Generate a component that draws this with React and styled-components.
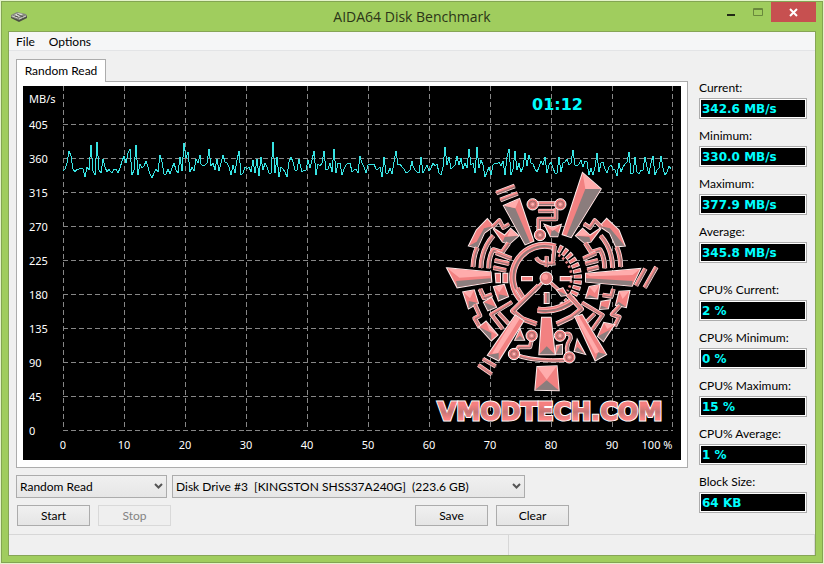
import React from "react";
import styled, { createGlobalStyle } from "styled-components";

const GlobalStyle = createGlobalStyle`
  * { box-sizing: border-box; }
  body { margin: 0; background: #e4f3ca; }
  body, button, input, select { font-family: Lato, "Open Sans", sans-serif; font-size: 12px; color: #000; }
`;

const Window = styled.div`
  display: flex;
  flex-direction: column;
  min-height: calc(100vh - 2px);
  margin: 1px;
  border: 1px solid #83a552;
  background: #a0cd5e;
  padding: 0 6px 6px;
`;

const TitleBar = styled.header`
  display: grid;
  grid-template-columns: 120px 1fr 120px;
  height: 29px;
`;

const AppIcon = styled.svg`
  margin: 7px 0 0 2px;
`;

const Title = styled.h1`
  margin: 0;
  font: 400 14px/29px "Open Sans", "Noto Sans", sans-serif;
  text-align: center;
  color: #2b3518;
`;

const WindowButtons = styled.div`
  display: flex;
  justify-content: flex-end;
  align-items: flex-start;
`;

const WindowButton = styled.button`
  width: ${(p) => (p.$close ? 45 : 27)}px;
  height: 20px;
  padding: 0;
  border: 0;
  background: ${(p) => (p.$close ? "#c75050" : "transparent")};
  svg { display: block; margin: 0 auto; }
`;

const Client = styled.div`
  flex: 1;
  display: flex;
  flex-direction: column;
  border: 1px solid #86a556;
  background: #f0f0f0;
`;

const MenuBar = styled.nav`
  display: flex;
  height: 19px;
  background: #f5f6f7;
  border-bottom: 1px solid #e3e4e6;
`;

const MenuButton = styled.button`
  border: 0;
  background: transparent;
  padding: 0 7px;
  line-height: 20px;
`;

const Content = styled.main`
  flex: 1;
  display: grid;
  grid-template-columns: 1fr 108px;
  gap: 11px;
  padding: 8px 8px 6px 7px;
`;

const Tab = styled.button`
  display: block;
  position: relative;
  z-index: 1;
  height: 23px;
  min-width: 90px;
  margin-bottom: -1px;
  padding: 0 7px;
  border: 1px solid #acacac;
  border-bottom: 0;
  background: #fff;
  line-height: 20px;
`;

const TabPanel = styled.section`
  padding: 4px 6px 7px;
  border: 1px solid #acacac;
  background: #fff;
`;

const Chart = styled.svg`
  display: block;
  width: 100%;
  height: auto;
  background: #000;
`;

const AxisText = styled.text`
  font: 11px "Noto Sans", sans-serif;
  fill: #fff;
`;

const Clock = styled.text`
  font: bold 16px "DejaVu Sans", sans-serif;
  fill: #00ffff;
`;

const LogoText = styled.text`
  font: bold 24px "DejaVu Sans", sans-serif;
  fill: url(#letters);
  stroke: ${(p) => (p.$outline ? "#fff" : "url(#letters)")};
  stroke-width: ${(p) => (p.$outline ? 3 : 1)}px;
`;

const SelectRow = styled.div`
  display: flex;
  gap: 5px;
  margin-top: 7px;
`;

const SelectBox = styled.label`
  position: relative;
  flex: 0 1 ${(p) => p.$width}px;
  select {
    appearance: none;
    display: block;
    width: 100%;
    height: 23px;
    padding: 0 20px 0 3px;
    border: 1px solid #acacac;
    border-radius: 0;
    background: linear-gradient(#f0f0f0, #e6e6e6);
    white-space: pre;
  }
  svg {
    position: absolute;
    right: 4px;
    top: 8px;
    pointer-events: none;
  }
`;

const ButtonRow = styled.div`
  display: flex;
  gap: 8px;
  margin: 7px 0 0 1px;
`;

const PushButton = styled.button`
  width: 73px;
  height: 21px;
  padding: 0;
  border: 1px solid #acacac;
  background: linear-gradient(#f0f0f0, #e5e5e5);
  line-height: 19px;
  &:disabled { color: #838383; border-color: #d9d9d9; background: #efefef; }
`;

const Spacer = styled.div`
  flex: 0 1 ${(p) => p.$width}px;
`;

const Readings = styled.aside`
  display: flex;
  flex-direction: column;
  gap: 9px;
  padding-top: 21px;
`;

const ReadingGroup = styled.div`
  display: grid;
  gap: 9px;
  &:last-child { margin-top: 10px; }
`;

const Reading = styled.label`
  display: grid;
  gap: 2px;
  line-height: 16px;
  white-space: nowrap;
`;

const ReadingValue = styled.input`
  width: 100%;
  height: 21px;
  padding: 0 2px;
  border: 1px solid #acacac;
  border-radius: 0;
  outline: 1px solid #fff;
  outline-offset: -2px;
  background: #000;
  color: #00ffff;
  font: bold 12px "DejaVu Sans", sans-serif;
`;

const StatusBar = styled.footer`
  display: grid;
  grid-template-columns: 62fr 38fr;
  height: 21px;
  border-top: 1px solid #d7d7d7;
`;

const StatusCell = styled.div`
  border-right: 1px solid #d7d7d7;
`;

const throughput = [
  { from: 63, to: 245, values: [171, 169, 163, 151, 156, 169, 172, 169, 169, 168, 169, 177, 167, 170, 145, 171, 175, 142, 170, 173, 159, 167, 172, 169, 171, 173, 169, 169, 173, 168, 161, 156, 163, 153, 149, 175, 170, 145, 175, 164, 168, 166, 161, 167, 174, 178, 173, 169, 172, 155, 162, 174, 174, 169, 174, 168, 163, 170, 173, 157, 171, 143, 158, 152, 172, 167, 171, 159, 163, 155, 164, 166, 165, 163, 149, 166, 163, 170, 159, 171, 163, 155, 162, 163, 167, 175, 165, 173, 160, 151, 175, 173, 167] },
  { from: 247, to: 467, values: [169, 167, 172, 160, 173, 159, 176, 157, 170, 163, 167, 173, 173, 142, 173, 157, 177, 167, 169, 172, 177, 162, 157, 162, 170, 170, 159, 168, 172, 170, 170, 160, 168, 160, 151, 175, 164, 166, 163, 151, 170, 169, 163, 172, 149, 173, 163, 163, 175, 169, 165, 163, 163, 172, 170, 169, 173, 156, 163, 167, 173, 165, 164, 164, 164, 169, 169, 167, 177, 157, 173, 173, 168, 174, 162, 151, 165, 164, 167, 169, 173, 172, 170, 161, 166, 170, 172, 173, 157, 173, 169, 165, 171, 168, 163, 166, 164, 173, 175, 167, 147, 165, 157, 169, 167, 165, 156, 165, 158, 169, 163, 168] },
  { from: 469, to: 671, values: [149, 165, 163, 173, 147, 168, 160, 165, 177, 172, 167, 175, 165, 163, 164, 162, 166, 161, 175, 157, 149, 175, 169, 151, 170, 163, 172, 167, 153, 166, 155, 163, 164, 169, 172, 167, 161, 165, 157, 173, 165, 162, 168, 173, 173, 157, 172, 163, 162, 159, 165, 163, 150, 165, 166, 164, 160, 167, 161, 162, 175, 168, 175, 167, 153, 172, 163, 162, 169, 173, 167, 165, 169, 170, 176, 163, 172, 167, 164, 162, 152, 174, 173, 157, 172, 174, 170, 170, 157, 167, 174, 163, 156, 175, 170, 168, 156, 168, 175, 172, 166, 169] },
];

const linePoints = throughput
  .flatMap(({ from, to, values }) =>
    values.map((y, i) => `${Math.round(from + ((to - from) * i) / (values.length - 1))},${y}`)
  )
  .join(" ");

const gridX = [63, 124, 185, 246, 307, 368, 429, 490, 551, 612, 672];
const rateLabels = [405, 360, 315, 270, 225, 180, 135, 90, 45, 0];

function Trace({ d, w = 10 }) {
  return (
    <g fill="none" strokeLinejoin="round">
      <path d={d} stroke="#fbe9e9" strokeWidth={w + 5} />
      <path d={d} stroke="#f07c7c" strokeWidth={w + 1} />
      <path d={d} stroke="#957878" strokeWidth={w / 2.5} transform="translate(2 2)" />
      <path d={d} stroke="#ffa5a5" strokeWidth={w / 5} transform="translate(-2 -2)" />
    </g>
  );
}

function Facet({ p, shade, light }) {
  return (
    <g>
      <polygon points={p} fill="#f28181" stroke="#fbecec" strokeWidth="6" paintOrder="stroke" />
      {shade && <polygon points={shade} fill="#8b7d7d" />}
      {light && <polygon points={light} fill="#ffacac" />}
    </g>
  );
}

function Node({ x, y }) {
  return (
    <g>
      <circle cx={x} cy={y} r="17" fill="#f47d7d" stroke="#fff" strokeWidth="3" />
      <circle cx={x} cy={y} r="10" fill="#d98080" stroke="#a06969" strokeWidth="3" />
      <circle cx={x} cy={y} r="4" fill="#ffb5b5" />
    </g>
  );
}

function Emblem() {
  return (
    <g transform="translate(430 165) scale(0.333333)">
      {/* upper left */}
      <Trace d="M199 84L254 63" w={9} />
      <Trace d="M211 105L263 85" w={9} />
      <Facet p="222,122 268,102 310,228 286,238" shade="222,122 256,130 300,232 286,238" light="222,122 268,102 256,130" />
      <Facet p="117,242 140,196 172,163 190,184 162,204 142,248" shade="140,230 162,190 188,184 162,204 142,248 117,242" />
      <Trace d="M188 186L208 166L220 188L238 177" w={8} />
      <Facet p="190,190 224,212 242,192 265,212 238,236 218,230" shade="224,216 265,212 238,236 218,230" light="242,192 265,212 232,214" />
      <Trace d="M142 248Q130 272 129 306" />
      <Trace d="M190 212Q154 252 153 309" />
      <Trace d="M236 234L216 262L190 254Q176 276 176 310" />
      <Trace d="M198 263L244 281" />
      <Trace d="M194 286L237 296" />
      <Trace d="M190 308L228 316" />
      <Facet p="52,310 182,322 184,350 82,367" shade="78,348 182,340 184,350 82,367" light="52,310 182,322 182,332 88,338" />
      <Facet p="197,326 210,326 210,352 199,352" />
      <Facet p="220,326 232,326 232,352 220,352" />

      {/* crown */}
      <Trace d="M308 116H390" w={10} />
      <Trace d="M325 138H373" w={8} />
      <Trace d="M326 202V162H378V130" w={9} />
      <Node x={308} y={118} />
      <Node x={391} y={118} />
      <Node x={330} y={210} />
      <Facet p="345,180 366,188 392,180 382,214 362,214" shade="366,190 388,206 382,214 362,214" light="345,180 366,188 392,180 368,198" />

      {/* dial */}
      <path d="M385 250A98 98 0 0 1 394 425" fill="none" stroke="#fbe9e9" strokeWidth="25" strokeDasharray="12 5" />
      <path d="M385 250A98 98 0 0 1 394 425" fill="none" stroke="#ef7c7c" strokeWidth="20" strokeDasharray="8 9" strokeDashoffset="-2" />
      <path d="M385 270A76 76 0 0 1 412 378" fill="none" stroke="#e98787" strokeWidth="8" strokeDasharray="7 8" />
      <Trace d="M376 246A97 97 0 0 0 280 410" w={16} />
      <Trace d="M374 242L368 298M318 278Q332 302 376 294M350 274V306" w={8} />
      <Trace d="M312 380L348 340L394 382" w={6} />
      <circle cx="349" cy="340" r="19" fill="#df7d7d" stroke="#fff" strokeWidth="3" />
      <circle cx="345" cy="336" r="9" fill="#ff9e9e" />
      <Facet p="276,336 306,336 306,346 276,346" />
      <Facet p="392,336 422,336 422,346 392,346" />
      <Facet p="382,376 398,370 410,390 394,392" shade="382,376 410,390 394,392" />
      <Facet p="344,384 356,384 356,414 344,414" shade="350,384 356,384 356,414 350,414" />

      {/* upper right */}
      <g transform="translate(330 0)">
        <Facet p="128,25 182,72 93,216 68,208" shade="136,72 182,72 93,216 80,212" light="128,25 182,72 136,72" />
        <Facet p="254,242 236,196 200,162 180,184 210,204 228,244" shade="182,184 210,190 254,242 228,244 210,204" />
        <Trace d="M184 186L164 166L150 188L132 176" w={8} />
        <Facet p="182,190 150,212 128,192 108,212 134,234 152,230" shade="108,212 148,216 152,230 134,234" light="128,192 148,212 108,212" />
        <Trace d="M230 246Q242 272 242 306" />
        <Trace d="M182 212Q217 252 218 309" />
        <Trace d="M136 234L154 262L180 254Q194 276 194 310" />
        <Trace d="M168 264L130 281" />
        <Trace d="M174 286L136 296" />
        <Trace d="M176 306L142 315" />
        <Facet p="138,326 300,312 276,362 138,350" shade="138,340 278,348 276,362 138,350" light="138,326 300,312 278,330 150,334" />
        <Trace d="M288 362L316 311" w={9} />
        <Trace d="M314 368L349 306" w={9} />
      </g>

      {/* lower left */}
      <g transform="translate(0 360)">
        <Facet p="100,22 132,16 144,54 116,70" shade="116,48 144,54 116,70" light="100,22 132,16 120,40" />
        <Trace d="M134 58L150 92L134 100L150 128" w={9} />
        <Facet p="148,126 168,110 202,150 184,166" shade="148,126 184,144 184,166" light="168,110 202,150 178,136" />
        <Trace d="M150 12L162 38L186 29" w={10} />
        <Facet p="162,52 184,38 198,66 174,76" shade="162,52 198,66 174,76" />
        <Facet p="192,6 222,0 234,34 206,46" shade="206,28 234,34 206,46" light="192,6 222,0 208,22" />
        <Trace d="M246 51L184 88L218 132M206 84L236 116" w={8} />
        <Trace d="M262 10L282 42" w={10} />
        <Trace d="M326 2L248 78L278 102L320 117" w={11} />
        <Facet p="256,92 280,108 206,226 174,210" shade="174,210 206,204 206,226" light="256,92 270,100 204,204 186,206" />
        <Trace d="M159 222L197 244M145 240L185 268" w={8} />
        <Facet p="270,134 282,164 256,164" shade="270,152 282,164 256,164" />
        <Trace d="M305 165L300 186H266L252 207Q308 232 418 224" w={8} />
        <Trace d="M323 74Q384 84 437 40" w={15} />
        <Facet p="336,98 362,98 374,208 328,208" shade="350,184 374,208 328,208" />
        <Node x={305} y={152} />
        <Node x={252} y={207} />
        <Facet p="322,246 380,244 386,316 316,314" shade="350,286 386,316 316,314" light="322,246 380,244 350,284" />
      </g>

      {/* lower right */}
      <g transform="translate(330 360)">
        <Facet p="148,6 178,0 172,40 138,38" shade="148,30 172,40 138,38" light="148,6 178,0 164,24" />
        <Trace d="M220 12L214 34L188 30" w={9} />
        <Facet p="184,50 210,46 204,70 180,72" shade="184,62 204,70 180,72" />
        <Facet p="238,20 268,18 258,66 228,60" shade="236,50 258,66 228,60" light="238,20 268,18 248,42" />
        <Trace d="M240 62L216 88L238 96L224 124" w={9} />
        <Facet p="174,154 192,114 222,120 190,168" shade="174,154 210,134 190,168" light="192,114 222,120 202,132" />
        <Trace d="M126 53L188 90L157 134M164 86L134 116" w={8} />
        <Trace d="M84 28L124 72L94 96L50 117" w={11} />
        <Facet p="106,96 126,90 198,208 166,226" shade="166,226 174,202 198,208" light="106,96 116,92 178,200 166,206" />
        <Facet p="112,166 134,206 104,198" shade="112,186 134,206 104,198" />
        <Facet p="50,182 66,180 66,206 48,206" shade="60,182 66,180 66,206 48,206" />
        <Trace d="M66 150Q92 138 92 160Q72 190 88 214" w={8} />
        <Node x={60} y={152} />
        <Node x={88} y={217} />
      </g>
    </g>
  );
}

function DiskChart() {
  return (
    <Chart viewBox="23 86 658 374" role="img" aria-label="Random read throughput">
      <defs>
        <linearGradient id="letters" x1="0" y1="0" x2="0" y2="1">
          <stop offset="0.25" stopColor="#f57f7f" />
          <stop offset="0.5" stopColor="#c57575" />
          <stop offset="0.75" stopColor="#fb8585" />
        </linearGradient>
      </defs>
      <g stroke="#878787" strokeDasharray="5 3" shapeRendering="crispEdges">
        {gridX.map((x) => <path key={x} d={`M${x + 0.5} 86V431`} />)}
        {rateLabels.map((n, i) => <path key={n} d={`M63 ${124.5 + 34 * i}H673`} />)}
      </g>
      <AxisText x="29" y="103">MB/s</AxisText>
      {rateLabels.map((n, i) => <AxisText key={n} x="29" y={129 + 34 * i}>{n}</AxisText>)}
      {gridX.map((x, i) => (
        <AxisText key={x} x={i === 10 ? 657 : x} y="449" textAnchor="middle">
          {i === 10 ? "100 %" : i * 10}
        </AxisText>
      ))}
      <polyline points={linePoints} fill="none" stroke="#38e4e4" shapeRendering="crispEdges" />
      <Clock x="532" y="110">01:12</Clock>
      <Emblem />
      <LogoText $outline aria-hidden="true" x="550" y="420" textAnchor="middle">VMODTECH.COM</LogoText>
      <LogoText x="550" y="420" textAnchor="middle">VMODTECH.COM</LogoText>
    </Chart>
  );
}

function Picker({ label, width, value }) {
  return (
    <SelectBox $width={width}>
      <select aria-label={label} defaultValue={value}>
        <option>{value}</option>
      </select>
      <svg width="9" height="7" viewBox="0 0 9 7" aria-hidden="true">
        <path d="M1 1L4.5 4.5L8 1" fill="none" stroke="#555" strokeWidth="2" />
      </svg>
    </SelectBox>
  );
}

function Stat({ label, value }) {
  return (
    <Reading>
      {label}
      <ReadingValue readOnly value={value} />
    </Reading>
  );
}

const rates = [
  ["Current:", "342.6 MB/s"],
  ["Minimum:", "330.0 MB/s"],
  ["Maximum:", "377.9 MB/s"],
  ["Average:", "345.8 MB/s"],
];

const load = [
  ["CPU% Current:", "2 %"],
  ["CPU% Minimum:", "0 %"],
  ["CPU% Maximum:", "15 %"],
  ["CPU% Average:", "1 %"],
  ["Block Size:", "64 KB"],
];

export default function App() {
  return (
    <>
      <GlobalStyle />
      <Window>
        <TitleBar>
          <AppIcon width="18" height="15" viewBox="0 0 18 15" aria-hidden="true">
            <path d="M1 7L9 10L17 6V9L9 13L1 9Z" fill="#4b4e43" />
            <path d="M1 6L7 3L16 5L17 7L9 11L1 8Z" fill="#85877e" />
            <path d="M4 6L8 4L13 5L9 8Z" fill="#d9d9d4" />
            <path d="M9 10L16 7M2 7L8 9" stroke="#d0d0c8" strokeWidth="1" />
            <path d="M7 5L13 8M5 7L8 8" stroke="#52544c" strokeWidth="1" />
          </AppIcon>
          <Title>AIDA64 Disk Benchmark</Title>
          <WindowButtons>
            <WindowButton aria-label="Minimize">
              <svg width="10" height="20" viewBox="0 0 10 20"><path d="M1 12H9V14H1Z" fill="#222a16" /></svg>
            </WindowButton>
            <WindowButton aria-label="Maximize" disabled>
              <svg width="10" height="20" viewBox="0 0 10 20"><path d="M0.5 6.5H9.5V13.5H0.5ZM0 7.5H10" fill="none" stroke="#69883c" /></svg>
            </WindowButton>
            <WindowButton $close aria-label="Close">
              <svg width="9" height="20" viewBox="0 0 9 20"><path d="M1 7L8 14M8 7L1 14" stroke="#fff" strokeWidth="2" /></svg>
            </WindowButton>
          </WindowButtons>
        </TitleBar>
        <Client>
          <MenuBar>
            <MenuButton>File</MenuButton>
            <MenuButton>Options</MenuButton>
          </MenuBar>
          <Content>
            <div>
              <Tab role="tab" aria-selected="true">Random Read</Tab>
              <TabPanel role="tabpanel"><DiskChart /></TabPanel>
              <SelectRow>
                <Picker label="Test" width={151} value="Random Read" />
                <Picker label="Drive" width={353} value={"Disk Drive #3\u00a0 [KINGSTON SHSS37A240G]\u00a0 (223.6 GB)"} />
              </SelectRow>
              <ButtonRow>
                <PushButton>Start</PushButton>
                <PushButton disabled>Stop</PushButton>
                <Spacer $width={228} />
                <PushButton>Save</PushButton>
                <PushButton>Clear</PushButton>
              </ButtonRow>
            </div>
            <Readings>
              <ReadingGroup>
                {rates.map(([label, value]) => <Stat key={label} label={label} value={value} />)}
              </ReadingGroup>
              <ReadingGroup>
                {load.map(([label, value]) => <Stat key={label} label={label} value={value} />)}
              </ReadingGroup>
            </Readings>
          </Content>
          <StatusBar>
            <StatusCell />
            <StatusCell />
          </StatusBar>
        </Client>
      </Window>
    </>
  );
}
